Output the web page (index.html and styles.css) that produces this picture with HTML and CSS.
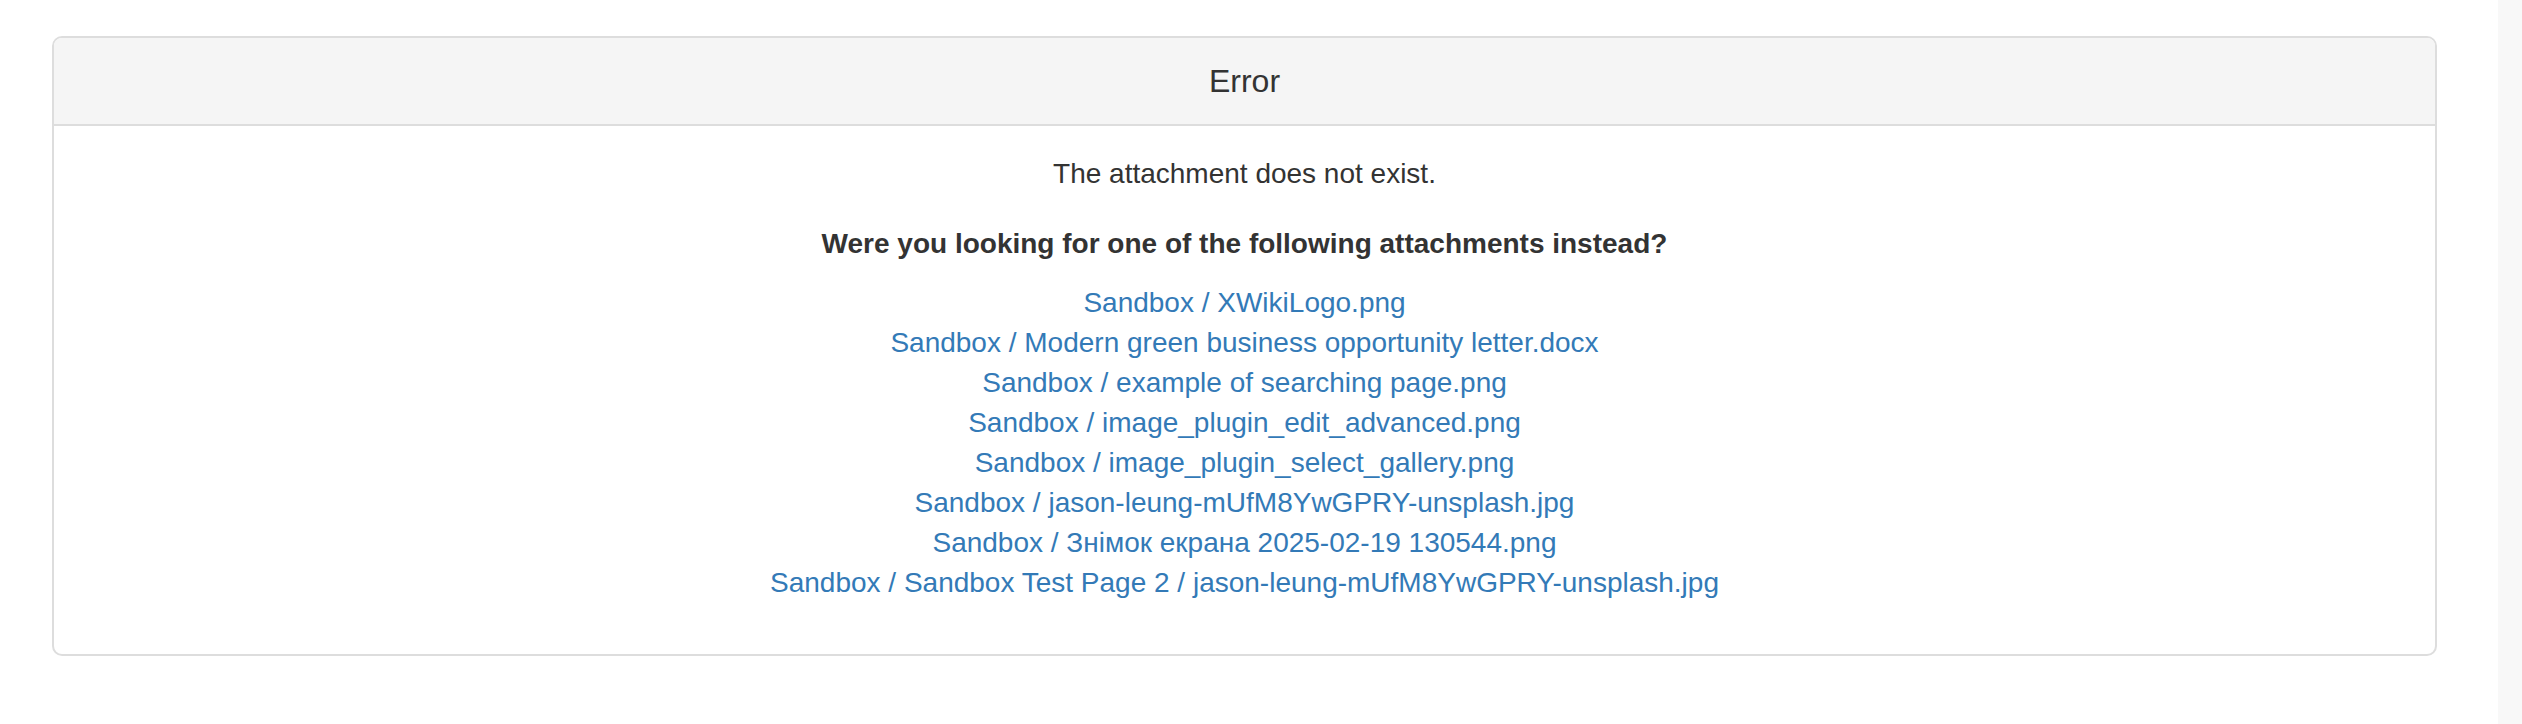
FILE: index.html
```html
<!DOCTYPE html>
<html>
<head>
    <title>Error</title>
    <meta name="viewport" content="width=device-width, initial-scale=1">
<link rel="stylesheet" href="styles.css">
</head>
<body>

  <div class="page">
    <div class="content">

      <div class="panel">
        <div class="panel-heading">
          <h1 class="panel-title">Error</h1>
        </div>
        <div class="panel-body">
          <p class="message">The attachment does not exist.</p>
          <p class="suggest-title"><strong>Were you looking for one of the following attachments instead?</strong></p>
          <ul class="suggest-list">
            <li><a href="#">Sandbox / XWikiLogo.png</a></li>
            <li><a href="#">Sandbox / Modern green business opportunity letter.docx</a></li>
            <li><a href="#">Sandbox / example of searching page.png</a></li>
            <li><a href="#">Sandbox / image_plugin_edit_advanced.png</a></li>
            <li><a href="#">Sandbox / image_plugin_select_gallery.png</a></li>
            <li><a href="#">Sandbox / jason-leung-mUfM8YwGPRY-unsplash.jpg</a></li>
            <li><a href="#">Sandbox / Знімок екрана 2025-02-19 130544.png</a></li>
            <li><a href="#">Sandbox / Sandbox Test Page 2 / jason-leung-mUfM8YwGPRY-unsplash.jpg</a></li>
          </ul>
        </div>
      </div>

    </div>
    <div class="scrollbar"></div>
  </div>

</body>
</html>
```

FILE: styles.css
```css
body {
  margin: 0;
  font-family: "Liberation Sans", Arial, sans-serif;
  font-size: 28px;
  line-height: 40px;
  color: #333;
  background-color: #fff;
}

.page {
  display: flex;
  min-height: 100vh;
}

.content {
  flex: 1;
  padding: 36px 61px 0 52px;
}

.scrollbar {
  width: 24px;
  background-color: #f8f8f8;
}

.panel {
  border: 2px solid #ddd;
  border-radius: 10px;
  overflow: hidden;
  background-color: #fff;
}

.panel-heading {
  padding: 25px 30px;
  background-color: #f5f5f5;
  border-bottom: 2px solid #ddd;
  text-align: center;
}

.panel-title {
  margin: 0;
  font-size: 32px;
  font-weight: normal;
  line-height: 36px;
  color: #333;
}

.panel-body {
  padding: 28px 30px 31px;
  text-align: center;
}

.message {
  margin: 0 0 30px;
}

.suggest-title {
  margin: 0 0 19px;
}

.suggest-list {
  list-style: none;
  margin: 0 0 20px;
  padding: 0;
}

.suggest-list a {
  color: #337ab7;
  text-decoration: none;
}

.suggest-list a:hover {
  text-decoration: underline;
}
```
